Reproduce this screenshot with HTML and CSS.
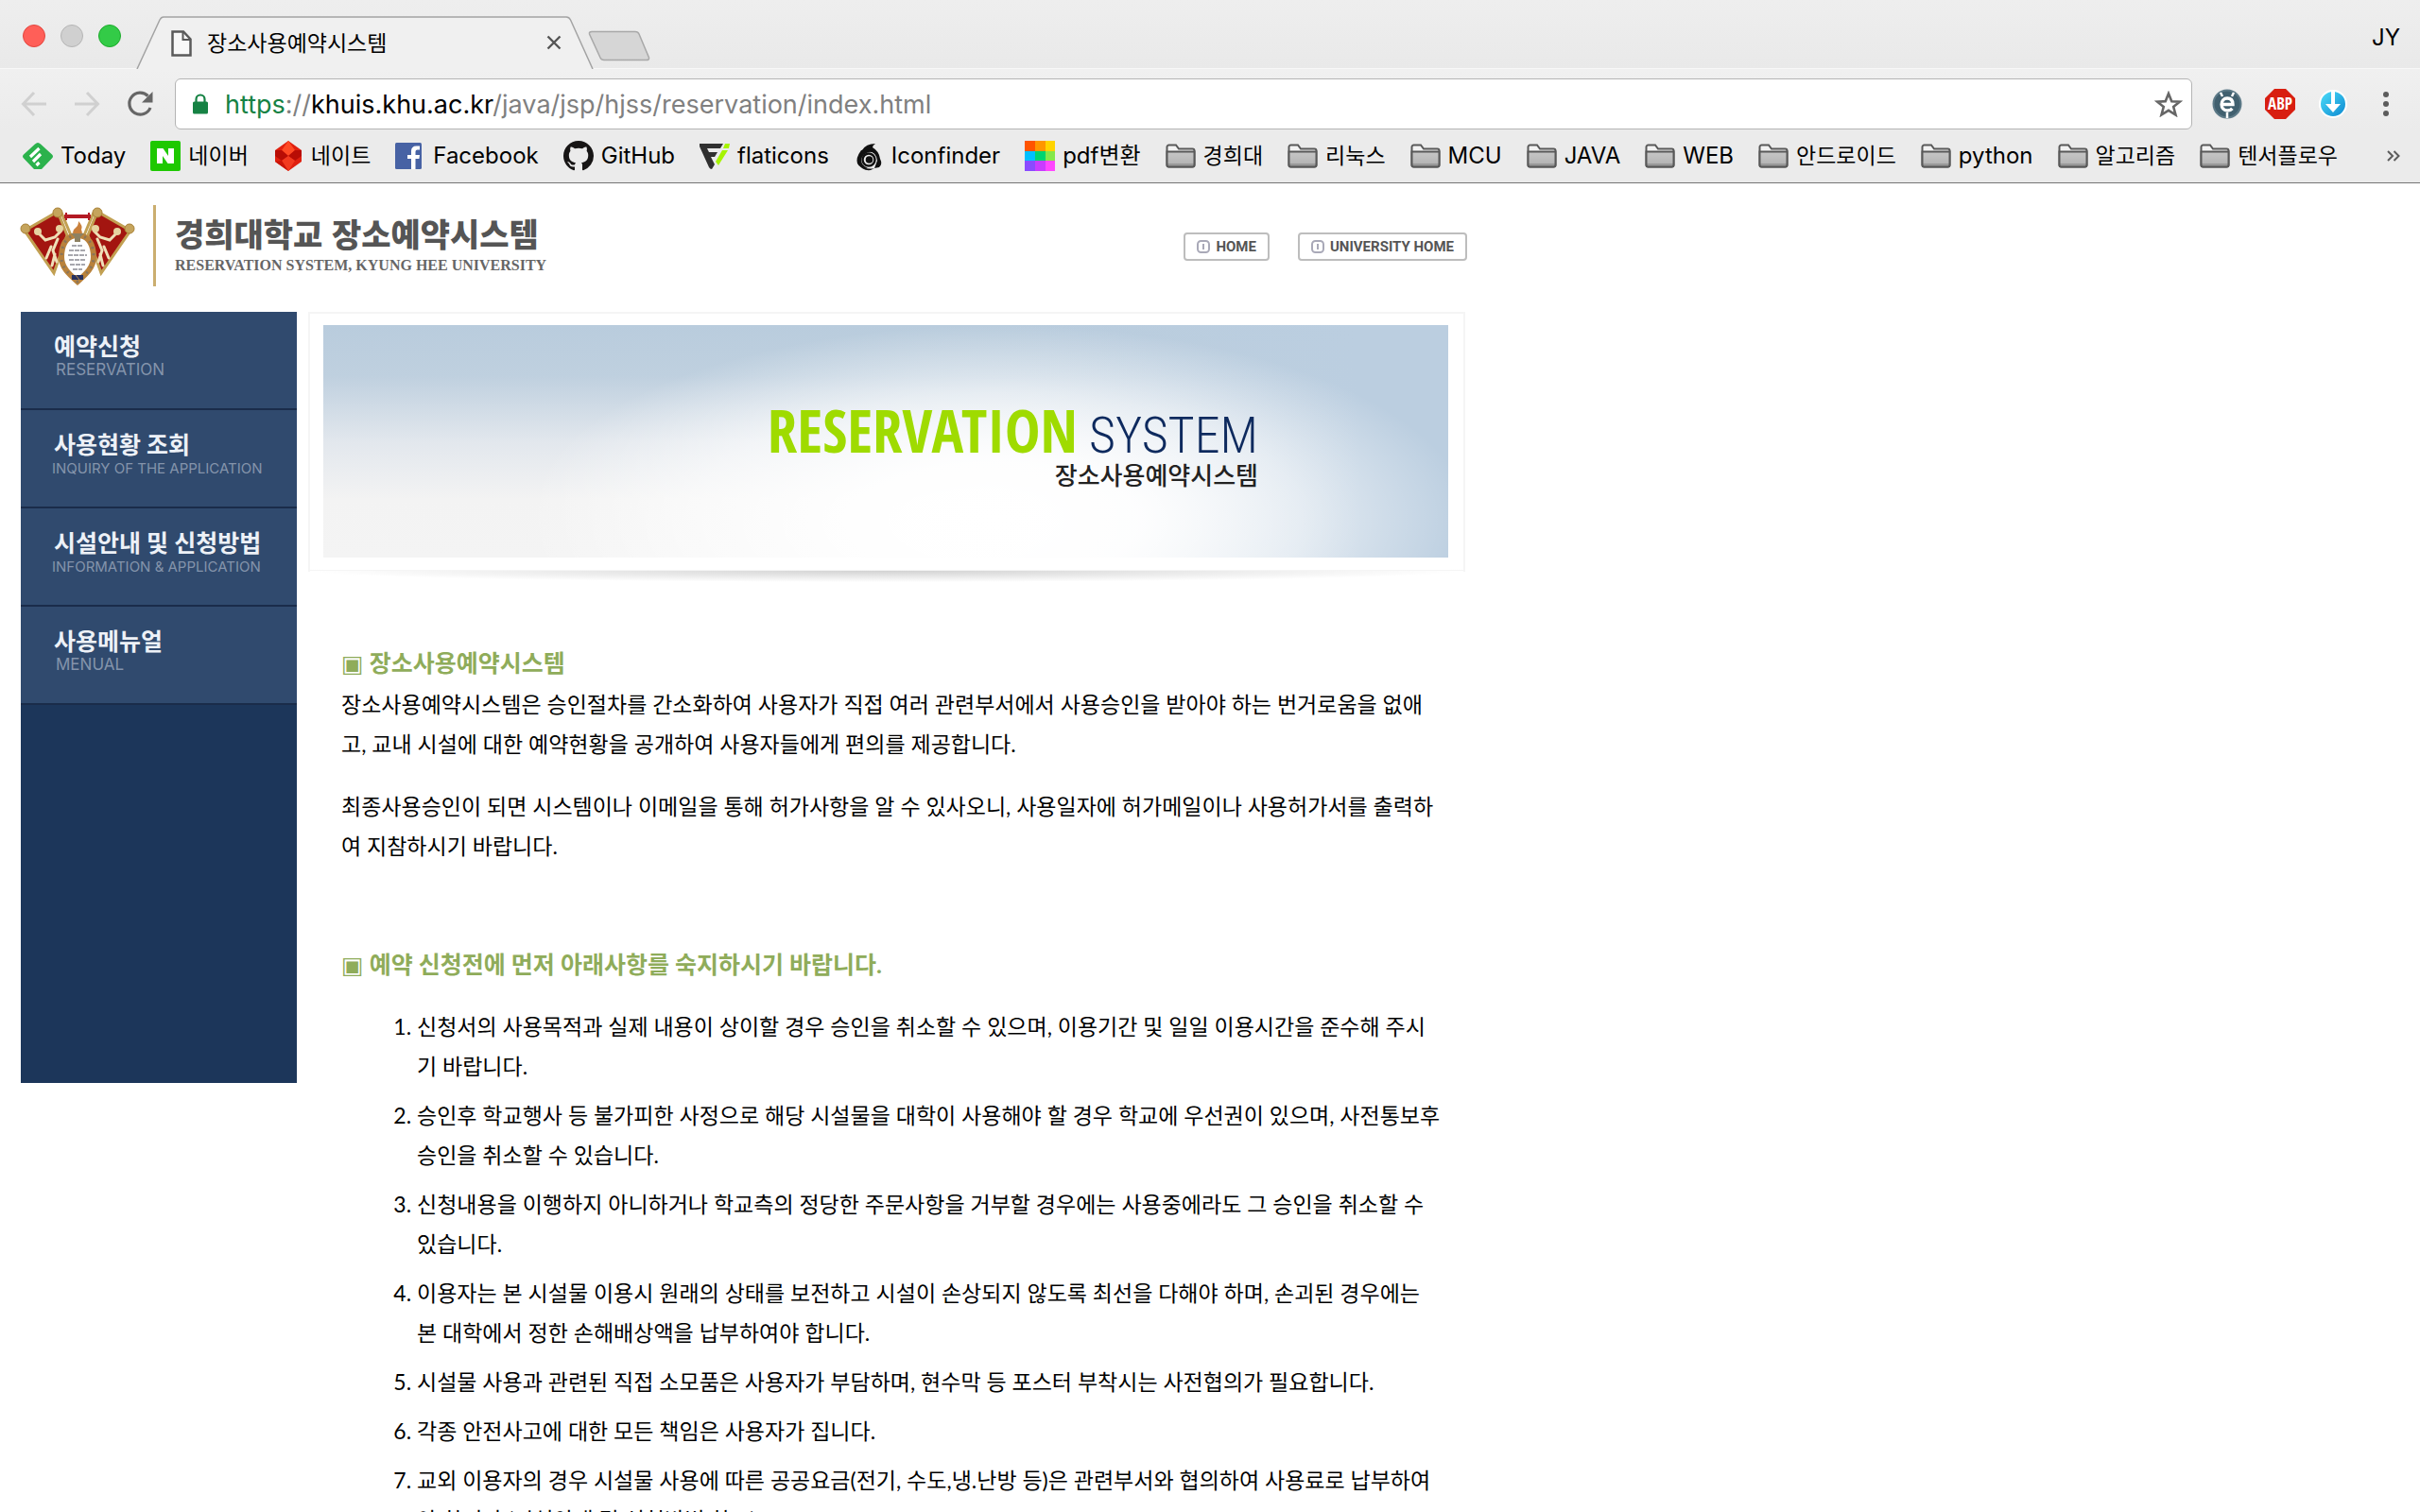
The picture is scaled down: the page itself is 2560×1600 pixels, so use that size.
FILE: index.html
```html
<!DOCTYPE html>
<html lang="ko">
<head>
<meta charset="utf-8">
<title>장소사용예약시스템</title>
<link rel="stylesheet" href="styles.css">
</head>
<body>
<svg width="0" height="0" class="defs" aria-hidden="true">
  <defs>
    <linearGradient id="folder-fill" x1="0" y1="0" x2="0" y2="1"><stop offset="0" stop-color="#c6c6c6"/><stop offset="1" stop-color="#b2b2b2"/></linearGradient>
    <linearGradient id="dl-fill" x1="0" y1="0" x2="1" y2="1"><stop offset="0" stop-color="#4fe0fb"/><stop offset="1" stop-color="#0a86cf"/></linearGradient>
    <symbol id="folder" viewBox="0 0 32 26">
      <path d="M1.500 22.500V3.500a2 2 0 0 1 2-2H11l3 4h14.500a2 2 0 0 1 2 2v15a2 2 0 0 1-2 2h-25a2 2 0 0 1-2-2z" fill="#f2f2f2" stroke="#585858" stroke-width="2"/>
      <path d="M2 9h28v14H2z" fill="url(#folder-fill)"/>
      <path d="M2 21h28v3H2z" fill="#999"/>
      <path d="M1.500 8.500h29v14a2 2 0 0 1-2 2h-25a2 2 0 0 1-2-2z" fill="none" stroke="#585858" stroke-width="2"/>
    </symbol>
  </defs>
</svg>

<header class="browser">
  <div class="tabstrip">
    <div class="lights"><span class="light red"></span><span class="light gray"></span><span class="light green"></span></div>
    <div class="tab">
      <svg class="tab-shape" viewBox="0 0 484 56" aria-hidden="true"><path d="M1 56L25 4Q26.500 1 29 1H455Q458 1 459.500 4L483 56z" fill="#f0f0f0"/><path d="M1 56L25 4Q26.500 1 29 1H455Q458 1 459.500 4L483 56" fill="none" stroke="#a3a3a3" stroke-width="1.500"/></svg>
      <svg class="tab-icon" width="22" height="28" viewBox="0 0 22 28"><path d="M1.500 1.500h11.500l7.500 8v17H1.500z" fill="#f8f8f8" stroke="#5a5a5a" stroke-width="2.500"/><path d="M12.500 1.500V10H20.500" fill="none" stroke="#5a5a5a" stroke-width="2"/></svg>
      <span class="tab-title">장소사용예약시스템</span>
      <button class="tab-close" aria-label="탭 닫기"><svg width="16" height="16" viewBox="0 0 16 16"><path d="M1.500 1.500l13 13M14.500 1.500l-13 13" stroke="#555" stroke-width="2.400"/></svg></button>
    </div>
    <button class="new-tab" aria-label="새 탭"><svg width="66" height="33" viewBox="0 0 66 33"><path d="M4 1.500H50Q53 1.500 54 4L64.500 29Q65 31.500 62 31.500H17Q14 31.500 13 29L1.500 4Q1 1.500 4 1.500z" fill="#d6d6d6" stroke="#a8a8a8" stroke-width="1.500"/></svg></button>
    <span class="profile">JY</span>
  </div>

  <div class="toolbar">
    <button aria-label="뒤로"><svg width="28" height="28" viewBox="0 0 28 28"><path d="M27 14H3M14 2L2.500 14 14 26" fill="none" stroke="#d0d0d0" stroke-width="3"/></svg></button>
    <button aria-label="앞으로"><svg width="28" height="28" viewBox="0 0 28 28"><path d="M1 14H25M14 2L25.500 14 14 26" fill="none" stroke="#d0d0d0" stroke-width="3"/></svg></button>
    <button aria-label="새로고침"><svg width="28" height="28" viewBox="0 0 28 28"><path d="M22.500 5.500A11.500 11.500 0 1 0 25 18" fill="none" stroke="#666" stroke-width="3.200"/><path d="M27.500 1v11.500H16z" fill="#666"/></svg></button>
    <div class="omnibox">
      <svg width="16" height="22" viewBox="0 0 16 22"><path d="M3.500 10V6a4.500 4.500 0 0 1 9 0v4" fill="none" stroke="#168244" stroke-width="2.200"/><rect y="8.500" width="16" height="13" rx="1.500" fill="#168244"/></svg>
      <span class="url"><span class="scheme">https</span>://<span class="host">khuis.khu.ac.kr</span>/java/jsp/hjss/reservation/index.html</span>
      <button aria-label="북마크"><svg width="30" height="28" viewBox="0 0 30 28"><path d="M15 3l3.300 8.200 8.700.4-6.800 5.500 2.300 8.400L15 20.800l-7.500 4.700 2.300-8.400L3 11.600l8.700-.4z" fill="none" stroke="#666" stroke-width="2.600"/></svg></button>
    </div>
    <div class="extensions">
      <button aria-label="확장 프로그램 e"><svg width="32" height="32" viewBox="0 0 32 32"><circle cx="16" cy="16" r="14.500" fill="#41606f" stroke="#5d7a88" stroke-width="2"/><path d="M9 4l2 4M23 4l-2 4M16 25v6" stroke="#fff" stroke-width="2.500"/><path d="M10.500 16.500h11.500c0-4.500-2.300-6.500-5.900-6.500s-6 2.800-6 6.500 2.500 6.500 6.100 6.500c2.300 0 4-.8 5.200-2.200" fill="none" stroke="#fff" stroke-width="3.400"/></svg></button>
      <button aria-label="ABP"><svg width="32" height="32" viewBox="0 0 32 32"><path d="M10 0h12l10 10v12L22 32H10L0 22V10z" fill="#d81e10"/><text x="16" y="22" text-anchor="middle" class="abp">ABP</text></svg></button>
      <button aria-label="다운로드"><svg width="32" height="32" viewBox="0 0 32 32"><circle cx="16" cy="16" r="14" fill="url(#dl-fill)" stroke="#fff" stroke-width="2"/><path d="M14 3h4v13h6l-8 9-8-9h6z" fill="#fff"/></svg></button>
      <button aria-label="메뉴"><svg width="32" height="32" viewBox="0 0 32 32"><g fill="#5c5c5c"><circle cx="16" cy="6" r="3"/><circle cx="16" cy="16" r="3"/><circle cx="16" cy="26" r="3"/></g></svg></button>
    </div>
  </div>

  <nav class="bookmarks">
    <a href="#"><svg width="32" height="32" viewBox="0 0 32 32"><path d="M13 3.500q3-3 6 0l12 11q2 2 0 4L20 30h-8L1 18.500q-2-2 0-4z" fill="#2bb24c"/><path d="M8 17l9.500-9M11 22l8-8M14.500 26l3-3" stroke="#fff" stroke-width="3.200"/></svg>Today</a>
    <a href="#" class="ko"><svg width="32" height="32" viewBox="0 0 32 32"><rect width="32" height="32" rx="2" fill="#1ec800"/><path d="M7 8h6.500l5.500 8V8h6v16h-6.500L13 16v8H7z" fill="#fff"/></svg>네이버</a>
    <a href="#" class="ko"><svg width="32" height="32" viewBox="0 0 32 32"><path d="M16 0L30 10v12L16 32 2 22V10z" fill="#e0200f"/><path d="M16 0l7 10-7 6-7-6z" fill="#ff4a25"/><path d="M2 10l7 0 7 6-7 5-7-5zM23 10h7v6l-7 5-7-5z" fill="#b80d05"/><path d="M9 21l7-5 7 5-7 11z" fill="#f23a20"/><path d="M2 22l7-1 7 11z" fill="#c91509"/></svg>네이트</a>
    <a href="#"><svg width="32" height="32" viewBox="2 0 32 32"><rect x="2" y="2" width="28" height="28" rx="1.500" fill="#4762a4"/><path d="M19 30V19h-4v-4h4v-4q0-5.500 5.500-5.500H28V9.500h-2.500q-2 0-2 2V15H28l-.6 4h-3.900v11z" fill="#fff"/></svg>Facebook</a>
    <a href="#"><svg width="32" height="32" viewBox="0 0 16 16"><path fill="#171515" d="M8 0C3.580 0 0 3.580 0 8c0 3.540 2.290 6.530 5.470 7.590.4.070.55-.17.55-.38 0-.19-.01-.82-.01-1.490-2.010.37-2.530-.49-2.690-.94-.09-.23-.48-.94-.82-1.130-.28-.15-.68-.52-.01-.53.630-.01 1.080.58 1.230.82.720 1.210 1.870.87 2.330.66.070-.52.280-.87.510-1.070-1.780-.2-3.640-.89-3.640-3.950 0-.87.310-1.590.82-2.150-.08-.2-.36-1.020.08-2.120 0 0 .67-.21 2.200.82.640-.18 1.320-.27 2-.27s1.360.09 2 .27c1.530-1.040 2.200-.82 2.200-.82.440 1.100.16 1.920.08 2.120.51.560.82 1.270.82 2.150 0 3.070-1.870 3.750-3.650 3.950.29.250.54.730.54 1.480 0 1.070-.01 1.930-.01 2.200 0 .21.150.46.550.38A8.010 8.010 0 0 0 16 8c0-4.420-3.580-8-8-8z"/></svg>GitHub</a>
    <a href="#"><svg width="32" height="32" viewBox="0 0 32 32"><path d="M0 3h25l-3 5H8l2 4h9l-3 5h-4l4 8-3 5q-2 0-3-2L0 6z" fill="#303030"/><path d="M27 3h5l-1 5h-6zM24 10h6L20 26l-3-4z" fill="#a6f400"/></svg>flaticons</a>
    <a href="#"><svg width="32" height="32" viewBox="0 0 32 32"><path d="M9 10Q13 3 23 3q-3 2-3 4 7 4 8 12 3 6-1 9l-5 1 3-8q-1-9-9-10-5 0-8 4z" fill="#111"/><path d="M8 10Q2 18 4 24q3 6 11 5-7-3-7-9 1-6 8-8 5-1 8 3-4-8-16-5z" fill="#111"/><circle cx="16" cy="20" r="6.500" fill="#ebebeb" stroke="#111" stroke-width="2.500"/><circle cx="16.500" cy="20" r="3.800" fill="#111"/><path d="M6 25q6 6 16 4l-4 2q-9 1-12-6z" fill="#111"/></svg>Iconfinder</a>
    <a href="#"><svg width="32" height="32" viewBox="0 0 32 32"><path fill="#ff5400" d="M0 0h11v11H0z"/><path fill="#ff9600" d="M11 0h11v11H11z"/><path fill="#ffd400" d="M22 0h10v11H22z"/><path fill="#00c0ff" d="M0 11h11v10H0z"/><path fill="#00d470" d="M11 11h11v10H11z"/><path fill="#84e84a" d="M22 11h10v10H22z"/><path fill="#8a4bff" d="M0 21h11v11H0z"/><path fill="#c83cff" d="M11 21h11v11H11z"/><path fill="#ff46ff" d="M22 21h10v11H22z"/></svg>pdf변환</a>
    <a href="#" class="ko"><svg width="32" height="26"><use href="#folder"/></svg>경희대</a>
    <a href="#" class="ko"><svg width="32" height="26"><use href="#folder"/></svg>리눅스</a>
    <a href="#"><svg width="32" height="26"><use href="#folder"/></svg>MCU</a>
    <a href="#"><svg width="32" height="26"><use href="#folder"/></svg>JAVA</a>
    <a href="#"><svg width="32" height="26"><use href="#folder"/></svg>WEB</a>
    <a href="#" class="ko"><svg width="32" height="26"><use href="#folder"/></svg>안드로이드</a>
    <a href="#"><svg width="32" height="26"><use href="#folder"/></svg>python</a>
    <a href="#" class="ko"><svg width="32" height="26"><use href="#folder"/></svg>알고리즘</a>
    <a href="#" class="ko"><svg width="32" height="26"><use href="#folder"/></svg>텐서플로우</a>
    <button class="more" aria-label="북마크 더보기"><svg width="14" height="12" viewBox="0 0 14 12"><path d="M1 1l5 5-5 5M7.500 1l5 5-5 5" fill="none" stroke="#5c5c5c" stroke-width="2"/></svg></button>
  </nav>
</header>

<div class="page">
  <header class="site-header">
    <a href="#" class="brand">
      <svg class="emblem" width="124" height="90" viewBox="10 10 124 90" aria-label="경희대학교">
        <path d="M15 37L50 17 60 42 46 82z" fill="#a31510" stroke="#c2a052" stroke-width="3"/>
        <path d="M127 37L92 17 82 42 96 82z" fill="#a31510" stroke="#c2a052" stroke-width="3"/>
        <path d="M54 18l10 24M88 18L78 42" stroke="#c2a052" stroke-width="3"/>
        <path d="M57 22h28" stroke="#b31a24" stroke-width="4"/><path d="M59 18v8M83 18v8" stroke="#b31a24" stroke-width="2"/>
        <g fill="#c5a45c" stroke="#a98238" stroke-width="1"><circle cx="16" cy="35" r="5"/><circle cx="50" cy="18" r="5"/><circle cx="92" cy="18" r="5"/><circle cx="126" cy="35" r="5"/></g>
        <g fill="none" stroke="#efe0b8" stroke-width="3" stroke-linecap="round"><path d="M31 41l6 6 10-3 6-6M50 46l-5 12 4 12M43 54l-5 12M47 62l-3 12"/><path d="M111 41l-6 6-10-3-6-6M92 46l5 12-4 12M99 54l5 12M95 62l3 12"/></g>
        <g fill="#e6d3a0"><circle cx="52" cy="35" r="4"/><circle cx="90" cy="35" r="4"/><circle cx="29" cy="38" r="4"/><circle cx="113" cy="38" r="4"/></g>
        <path d="M71 42c-13 0-17 12-17 23 0 11 8 18 17 26 9-8 17-15 17-26 0-11-4-23-17-23z" fill="#fff" stroke="#b9823c" stroke-width="6"/>
        <path d="M71 42c-13 0-17 12-17 23 0 11 8 18 17 26 9-8 17-15 17-26 0-11-4-23-17-23z" fill="none" stroke="#87755c" stroke-width="3" stroke-dasharray="2 5"/>
        <path d="M71 46l-5-7q0-3 3-5 3-2 3-7 5 5 3 9 2 4-1 7z" fill="#c9803c"/><path d="M64 40h14l-4 4v5h-6v-5z" fill="#8d8162"/>
        <path d="M65 53h12M62 58h18M61 63h20M62 68h18M63 73h16M66 78h10" stroke="#8b8b93" stroke-width="1.500" stroke-dasharray="5 1"/>
        <path d="M65 84h12v5H65z" fill="#27315f"/><path d="M69 84l4 5" stroke="#b98a44"/>
      </svg>
      <span class="brand-rule"></span>
      <span class="brand-text"><span class="brand-ko">경희대학교 장소예약시스템</span><span class="brand-en">RESERVATION SYSTEM, KYUNG HEE UNIVERSITY</span></span>
    </a>
    <nav class="home-links">
      <a href="#"><svg width="14" height="14" viewBox="0 0 14 14"><rect x="1" y="1" width="12" height="12" rx="3.500" fill="none" stroke="#a9a9b8" stroke-width="2"/><path d="M7 4v6" stroke="#a9a9b8" stroke-width="2"/></svg>HOME</a>
      <a href="#"><svg width="14" height="14" viewBox="0 0 14 14"><rect x="1" y="1" width="12" height="12" rx="3.500" fill="none" stroke="#a9a9b8" stroke-width="2"/><path d="M7 4v6" stroke="#a9a9b8" stroke-width="2"/></svg>UNIVERSITY HOME</a>
    </nav>
  </header>

  <div class="columns">
    <nav class="side">
      <a href="#">예약신청<small class="wide">RESERVATION</small></a>
      <a href="#">사용현황 조회<small>INQUIRY OF THE APPLICATION</small></a>
      <a href="#">시설안내 및 신청방법<small>INFORMATION &amp; APPLICATION</small></a>
      <a href="#">사용메뉴얼<small class="wide">MENUAL</small></a>
    </nav>
    <main>
      <div class="hero"><div class="hero-image">
        <p class="hero-title"><b>RESERVATION</b> <span>SYSTEM</span></p>
        <p class="hero-sub">장소사용예약시스템</p>
      </div></div>
      <article>
        <h2><span class="mark">▣</span> 장소사용예약시스템</h2>
        <p>장소사용예약시스템은 승인절차를 간소화하여 사용자가 직접 여러 관련부서에서 사용승인을 받아야 하는 번거로움을 없애<br>고, 교내 시설에 대한 예약현황을 공개하여 사용자들에게 편의를 제공합니다.</p>
        <p>최종사용승인이 되면 시스템이나 이메일을 통해 허가사항을 알 수 있사오니, 사용일자에 허가메일이나 사용허가서를 출력하<br>여 지참하시기 바랍니다.</p>
        <h2 class="second"><span class="mark">▣</span> 예약 신청전에 먼저 아래사항를 숙지하시기 바랍니다.</h2>
        <ol>
          <li>신청서의 사용목적과 실제 내용이 상이할 경우 승인을 취소할 수 있으며, 이용기간 및 일일 이용시간을 준수해 주시<br>기 바랍니다.</li>
          <li>승인후 학교행사 등 불가피한 사정으로 해당 시설물을 대학이 사용해야 할 경우 학교에 우선권이 있으며, 사전통보후<br>승인을 취소할 수 있습니다.</li>
          <li>신청내용을 이행하지 아니하거나 학교측의 정당한 주문사항을 거부할 경우에는 사용중에라도 그 승인을 취소할 수<br>있습니다.</li>
          <li>이용자는 본 시설물 이용시 원래의 상태를 보전하고 시설이 손상되지 않도록 최선을 다해야 하며, 손괴된 경우에는<br>본 대학에서 정한 손해배상액을 납부하여야 합니다.</li>
          <li>시설물 사용과 관련된 직접 소모품은 사용자가 부담하며, 현수막 등 포스터 부착시는 사전협의가 필요합니다.</li>
          <li>각종 안전사고에 대한 모든 책임은 사용자가 집니다.</li>
          <li>교외 이용자의 경우 시설물 사용에 따른 공공요금(전기, 수도,냉.난방 등)은 관련부서와 협의하여 사용료로 납부하여<br>야 합니다.(시설안내 및 신청방법 참조)</li>
        </ol>
      </article>
    </main>
  </div>
</div>
</body>
</html>
```
FILE: styles.css
```css
* { box-sizing: border-box; }
body {
  margin: 0;
  height: 100vh;
  overflow: hidden;
  background: #fff;
  color: #000;
  font-family: Lato, "Noto Sans CJK KR", sans-serif;
  font-size: 23px;
}
.defs { position: absolute; }
svg { display: block; flex: none; }
button { display: flex; align-items: center; padding: 0; border: 0; background: none; }
a { color: inherit; text-decoration: none; }
p, h2 { margin: 0; }

/* Browser window */
.browser { border-bottom: 1px solid #757575; background: #ebebeb; }
.tabstrip {
  display: flex;
  height: 73px;
  padding: 0 21px 0 24px;
  border-bottom: 1px solid #f8f8f8;
  background: linear-gradient(#eee, #e9e9e9);
}
.lights { display: flex; gap: 16px; padding-top: 26px; width: 120px; }
.light { width: 24px; height: 24px; border-radius: 50%; border: 1px solid; }
.red { background: #ff5f58; border-color: #e2463f; }
.gray { background: #d0d0d0; border-color: #b5b5b5; }
.green { background: #33cb47; border-color: #1dab2c; }
.tab {
  position: relative;
  display: flex;
  align-items: center;
  width: 484px;
  height: 56px;
  margin-top: 17px;
  padding: 0 34px 0 37px;
}
.tab-shape { position: absolute; inset: 0; width: 100%; height: 100%; }
.tab-icon { position: relative; margin-top: 2px; }
.tab-title { position: relative; flex: 1; margin: 0 0 0 16px; line-height: 34px; }
.tab-close { position: relative; }
.new-tab { align-self: flex-start; margin: 32px auto 0 -6px; }
.profile { margin-top: 23px; font: 24px/34px Inter, sans-serif; }

.toolbar { display: flex; align-items: center; gap: 28px; padding: 10px 20px 0 22px; background: linear-gradient(#f0f0f0, #ebebeb); }
.omnibox {
  display: flex;
  align-items: center;
  flex: 1;
  height: 54px;
  margin-left: -5px;
  padding: 0 9px 0 18px;
  border: 1px solid #b4b4b4;
  border-radius: 6px;
  background: #fff;
}
.url { flex: 1; margin: 2px 0 0 18px; color: #808080; font: 27px/40px Inter, sans-serif; }
.scheme { color: #168244; }
.host { color: #000; }
.extensions { display: flex; gap: 24px; margin-left: -7px; }
.abp { font: bold 17px "Open Sans Condensed", "Roboto Condensed", sans-serif; fill: #fff; }

.bookmarks {
  display: flex;
  align-items: center;
  gap: 26px;
  height: 56px;
  padding: 0 21px 0 24px;
  font: 24px/34px Inter, "Noto Sans CJK KR", sans-serif;
  white-space: nowrap;
}
.bookmarks a { display: flex; align-items: center; gap: 8px; }
.bookmarks .ko { font-size: 23px; }
.more { margin-left: auto; }

/* Site */
.page { max-width: 1552px; padding-left: 22px; }
.site-header { display: flex; justify-content: space-between; height: 136px; }
.brand { display: flex; padding-top: 23px; }
.emblem { margin-left: -1px; }
.brand-rule { width: 3px; height: 86px; margin: 0 20px 0 17px; background: #cbae70; }
.brand-text { display: flex; flex-direction: column; padding-top: 8px; color: #555; white-space: nowrap; }
.brand-ko { font-family: "Noto Sans CJK KR", sans-serif; font-size: 34px; line-height: 44px; font-weight: 900; }
.brand-en { font: bold 16px/20px "Liberation Serif", serif; padding-top: 2px; color: #666; }
.home-links { display: flex; gap: 30px; padding-top: 52px; }
.home-links a {
  display: flex;
  align-items: center;
  gap: 6px;
  height: 30px;
  padding: 0 12px;
  border: 2px solid #bdbdbd;
  border-radius: 4px;
  color: #555;
  font: bold 15px/20px Roboto, sans-serif;
}

.columns { display: flex; align-items: flex-start; gap: 12px; }
.side { width: 292px; height: 816px; background: #1c365a; flex: none; }
.side a {
  display: block;
  height: 104px;
  padding: 19px 0 0 35px;
  border-bottom: 2px solid #1a2c4a;
  background: #304a6e;
  color: #edf1f7;
  font-size: 25px;
  line-height: 34px;
  font-weight: 700;
  white-space: nowrap;
}
.side small { display: block; margin-left: -2px; color: #8494ab; font: 15px/17px Inter, sans-serif; }
.side .wide { margin-left: 2px; font-size: 17px; }

main { flex: 1; min-width: 0; }
.hero { position: relative; height: 275px; margin-right: 2px; padding: 12px 16px 13px 14px; border: 2px solid #f5f5f5; background: #fff; }
.hero::after {
  content: "";
  position: absolute;
  left: 0;
  right: 0;
  top: calc(100% + 1px);
  height: 12px;
  background: radial-gradient(ellipse 50% 100% at 50% 0, #d2d2d2, #fff);
}
.hero-image {
  height: 100%;
  padding: 78px 201px 0 0;
  text-align: right;
  background:
    radial-gradient(ellipse 42% 84% at 60% 84%, #fff 0, #fffffff0 30%, #ffffff90 65%, #fff0 100%),
    linear-gradient(to right, #bbcee000 60%, #bbcee0 92%),
    linear-gradient(#b9ccdd, #bfd0df 22%, #e2e7ed 50%, #f3f3f3 75%, #f4f4f4);
}
.hero-title {
  display: flex;
  justify-content: flex-end;
  align-items: baseline;
  gap: 12px;
  height: 66px;
  font: bold 63px/66px "Open Sans Condensed", "Roboto Condensed", sans-serif;
  white-space: nowrap;
}
.hero-title b { color: #9fdb00; }
.hero-title span { color: #0e2a5e; font: 300 54px/60px "Roboto Condensed", sans-serif; }
.hero-sub { font-family: "Noto Sans CJK KR", sans-serif; font-size: 26px; line-height: 28px; font-weight: 500; color: #222; }

article { padding: 75px 0 0 35px; line-height: 42px; white-space: nowrap; }
h2 { color: #8fac5a; font-size: 25px; line-height: 42px; font-weight: 700; }
.mark { font-family: "DejaVu Sans", sans-serif; font-weight: 400; }
article p { margin-bottom: 24px; }
.second { margin-top: 83px; }
ol { margin: 22px 0 0; padding-left: 80px; }
li { margin-bottom: 10px; }
```
